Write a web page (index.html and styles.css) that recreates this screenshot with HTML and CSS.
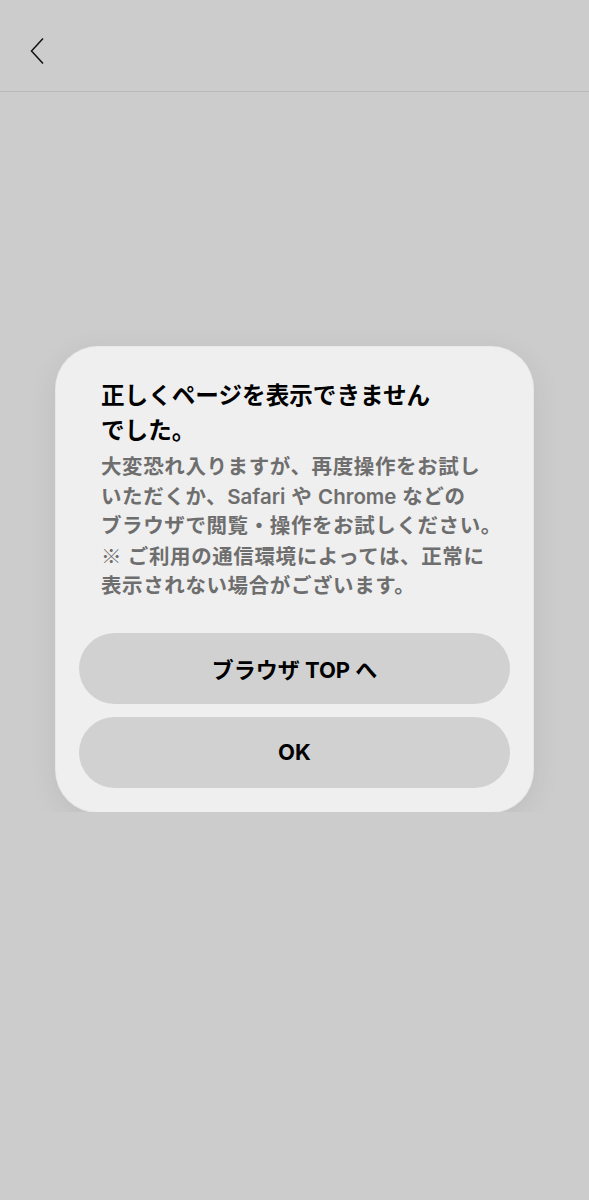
FILE: index.html
```html
<!DOCTYPE html>
<html lang="ja">
<head>
<meta charset="utf-8">
<link rel="stylesheet" href="styles.css">
</head>
<body>
<header class="header">
  <svg class="back" width="16" height="28" viewBox="0 0 16 28"><path d="M13 1.5 L1.5 14 L13 26.5" fill="none" stroke="#111" stroke-width="1.5"/></svg>
</header>
<main class="main">
  <div class="dialog">
    <div class="text">
      <h1 class="title">正しくページを表示できません<br>でした。</h1>
      <p class="message">大変恐れ入りますが、再度操作をお試し<br>いただくか、<span class="latin">Safari</span> や <span class="latin">Chrome</span> などの<br>ブラウザで閲覧・操作をお試しください。<br><span class="mark">※</span> ご利用の通信環境によっては、正常に<br>表示されない場合がございます。</p>
    </div>
    <div class="actions">
      <button class="btn">ブラウザ TOP へ</button>
      <button class="btn">OK</button>
    </div>
  </div>
</main>
</body>
</html>
```
FILE: styles.css
```css
html, body {
  margin: 0;
  padding: 0;
  background: #cccccc;
  font-family: Inter, "Noto Sans CJK JP", sans-serif;
}
.header {
  height: 91px;
  border-bottom: 1px solid #b9b9b9;
  display: flex;
  align-items: center;
  padding-left: 30px;
}
.back {
  display: block;
  margin-top: 10px;
}
.main {
  padding-top: 255px;
  display: flex;
  justify-content: center;
}
.dialog {
  width: 477px;
  box-sizing: border-box;
  background: #efefef;
  border-radius: 42px;
  padding: 31px 23px 24px;
  box-shadow: 0 0 0 1px rgba(255,255,255,0.6), 0 6px 30px rgba(0,0,0,0.08);
}
.text {
  padding: 0 10px 0 22px;
}
.title {
  margin: 0;
  font-size: 23.6px;
  line-height: 35px;
  font-weight: 700;
  color: #000;
  white-space: nowrap;
}
.message {
  margin: 4px 0 0;
  font-size: 20.5px;
  letter-spacing: 0.6px;
  line-height: 29.5px;
  font-weight: 600;
  color: #6e6e6e;
  white-space: nowrap;
}
.latin {
  letter-spacing: 0;
}
.mark {
  font-family: "Noto Sans CJK JP", sans-serif;
  font-weight: 400;
}
.actions {
  margin-top: 32px;
  display: flex;
  flex-direction: column;
  gap: 13px;
}
.btn {
  height: 71px;
  border: none;
  border-radius: 36px;
  background: #d1d1d1;
  font-family: Inter, "Noto Sans CJK JP", sans-serif;
  font-size: 22px;
  font-weight: 700;
  color: #000;
  padding: 0;
}
```
